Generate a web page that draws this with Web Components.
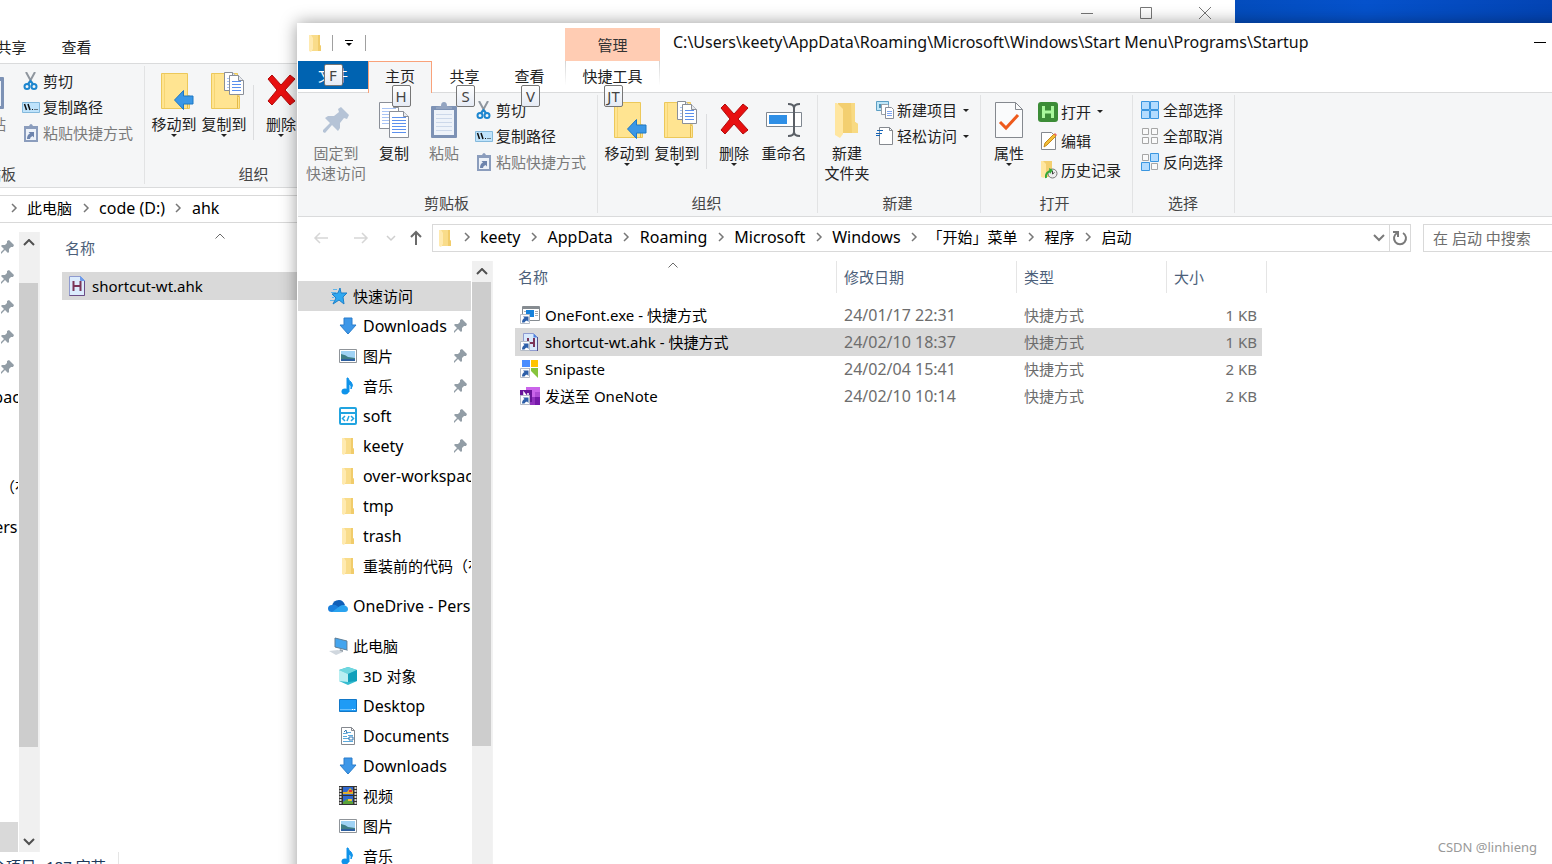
<!DOCTYPE html>
<html lang="zh-CN">
<head>
<meta charset="utf-8">
<title>启动</title>
<style>
html,body{margin:0;height:100%;overflow:hidden}
body{font:15px/20px "Noto Sans","Noto Sans CJK SC",sans-serif;color:#000}
</style>
</head>
<body>
<desk-top>
  <explorer-window class="back">
    <ribbon-tab slot="tabs" kind="file">文件</ribbon-tab>
    <ribbon-tab slot="tabs" kind="active">主页</ribbon-tab>
    <ribbon-tab slot="tabs">共享</ribbon-tab>
    <ribbon-tab slot="tabs">查看</ribbon-tab>
    <ribbon-group slot="ribbon" label="剪贴板" kind="clip">
      <big-button class="wide" icon="pin" off>固定到<br>快速访问</big-button>
      <big-button icon="copy">复制</big-button>
      <big-button icon="paste" off>粘贴</big-button>
      <small-button slot="small" icon="cut">剪切</small-button>
      <small-button slot="small" icon="path">复制路径</small-button>
      <small-button slot="small" icon="pastelink" off>粘贴快捷方式</small-button>
    </ribbon-group>
    <ribbon-group slot="ribbon" label="组织" kind="org">
      <big-button icon="moveto" menu>移动到</big-button>
      <big-button icon="copyto" menu>复制到</big-button>
      <rule-line></rule-line>
      <big-button icon="del" menu>删除</big-button>
      <big-button icon="rename">重命名</big-button>
    </ribbon-group>
    <crumb-item slot="crumbs">此电脑</crumb-item>
    <crumb-item slot="crumbs" lang="en">code (D:)</crumb-item>
    <crumb-item slot="crumbs" lang="en">ahk</crumb-item>
    <nav-tree slot="tree" pos="scrolled">
      <tree-item icon="down" pin lang="en">Downloads</tree-item>
      <tree-item icon="pic" pin>图片</tree-item>
      <tree-item icon="music" pin>音乐</tree-item>
      <tree-item icon="soft" pin lang="en">soft</tree-item>
      <tree-item icon="folder" pin lang="en">keety</tree-item>
      <tree-item icon="folder" lang="en">over-workspace</tree-item>
      <tree-item icon="folder" lang="en">tmp</tree-item>
      <tree-item icon="folder" lang="en">trash</tree-item>
      <tree-item icon="folder">重装前的代码（有用）</tree-item>
      <tree-item icon="onedrive" root lang="en">OneDrive - Personal</tree-item>
      <tree-item icon="pc" root>此电脑</tree-item>
      <tree-item icon="cube">3D 对象</tree-item>
      <tree-item icon="desktop" lang="en">Desktop</tree-item>
      <tree-item icon="doc" lang="en">Documents</tree-item>
      <tree-item icon="down" lang="en">Downloads</tree-item>
      <tree-item icon="video">视频</tree-item>
      <tree-item icon="pic">图片</tree-item>
      <tree-item icon="music">音乐</tree-item>
      <tree-item icon="desktop" lang="en">OS (C:)</tree-item>
      <tree-item icon="desktop" selected lang="en">code (D:)</tree-item>
    </nav-tree>
    <file-list slot="files" data="ahk"></file-list>
    <status-line slot="status"><span slot="count">1 个项目</span><span slot="picked">选中 1 个项目</span><span slot="size">187 字节</span></status-line>
  </explorer-window>

  <explorer-window class="front">
    <quick-bar slot="quick"></quick-bar>
    <span slot="context">管理</span>
    <span slot="title">C:\Users\keety\AppData\Roaming\Microsoft\Windows\Start Menu\Programs\Startup</span>
    <ribbon-tab slot="tabs" kind="file" tip="F">文件</ribbon-tab>
    <ribbon-tab slot="tabs" kind="active" tip="H">主页</ribbon-tab>
    <ribbon-tab slot="tabs" tip="S">共享</ribbon-tab>
    <ribbon-tab slot="tabs" tip="V">查看</ribbon-tab>
    <ribbon-tab slot="tabs" kind="context" tip="JT">快捷工具</ribbon-tab>
    <ribbon-group slot="ribbon" label="剪贴板" kind="clip">
      <big-button class="wide" icon="pin" off>固定到<br>快速访问</big-button>
      <big-button icon="copy">复制</big-button>
      <big-button icon="paste" off>粘贴</big-button>
      <small-button slot="small" icon="cut">剪切</small-button>
      <small-button slot="small" icon="path">复制路径</small-button>
      <small-button slot="small" icon="pastelink" off>粘贴快捷方式</small-button>
    </ribbon-group>
    <ribbon-group slot="ribbon" label="组织" kind="org">
      <big-button icon="moveto" menu>移动到</big-button>
      <big-button icon="copyto" menu>复制到</big-button>
      <rule-line></rule-line>
      <big-button icon="del" menu>删除</big-button>
      <big-button icon="rename">重命名</big-button>
    </ribbon-group>
    <ribbon-group slot="ribbon" label="新建" kind="new">
      <big-button icon="newfolder">新建<br>文件夹</big-button>
      <small-button slot="small" icon="newitem" menu>新建项目</small-button>
      <small-button slot="small" icon="access" menu>轻松访问</small-button>
    </ribbon-group>
    <ribbon-group slot="ribbon" label="打开" kind="open">
      <big-button icon="props" menu>属性</big-button>
      <small-button slot="small" class="tall" icon="ahk" menu>打开</small-button>
      <small-button slot="small" class="tall" icon="edit">编辑</small-button>
      <small-button slot="small" class="tall" icon="history">历史记录</small-button>
    </ribbon-group>
    <ribbon-group slot="ribbon" label="选择" kind="select">
      <small-button slot="small" class="loose" icon="selall">全部选择</small-button>
      <small-button slot="small" class="loose" icon="selnone">全部取消</small-button>
      <small-button slot="small" class="loose" icon="selinv">反向选择</small-button>
    </ribbon-group>
    <crumb-item slot="crumbs" lang="en">keety</crumb-item>
    <crumb-item slot="crumbs" lang="en">AppData</crumb-item>
    <crumb-item slot="crumbs" lang="en">Roaming</crumb-item>
    <crumb-item slot="crumbs" lang="en">Microsoft</crumb-item>
    <crumb-item slot="crumbs" lang="en">Windows</crumb-item>
    <crumb-item slot="crumbs">「开始」菜单</crumb-item>
    <crumb-item slot="crumbs">程序</crumb-item>
    <crumb-item slot="crumbs">启动</crumb-item>
    <search-box slot="search" hint="在 启动 中搜索"></search-box>
    <nav-tree slot="tree">
      <tree-item icon="star" root selected>快速访问</tree-item>
      <tree-item icon="down" pin lang="en">Downloads</tree-item>
      <tree-item icon="pic" pin>图片</tree-item>
      <tree-item icon="music" pin>音乐</tree-item>
      <tree-item icon="soft" pin lang="en">soft</tree-item>
      <tree-item icon="folder" pin lang="en">keety</tree-item>
      <tree-item icon="folder" lang="en">over-workspace</tree-item>
      <tree-item icon="folder" lang="en">tmp</tree-item>
      <tree-item icon="folder" lang="en">trash</tree-item>
      <tree-item icon="folder">重装前的代码（有用）</tree-item>
      <tree-item icon="onedrive" root lang="en">OneDrive - Personal</tree-item>
      <tree-item icon="pc" root>此电脑</tree-item>
      <tree-item icon="cube">3D 对象</tree-item>
      <tree-item icon="desktop" lang="en">Desktop</tree-item>
      <tree-item icon="doc" lang="en">Documents</tree-item>
      <tree-item icon="down" lang="en">Downloads</tree-item>
      <tree-item icon="video">视频</tree-item>
      <tree-item icon="pic">图片</tree-item>
      <tree-item icon="music">音乐</tree-item>
    </nav-tree>
    <file-list slot="files" data="startup"></file-list>
  </explorer-window>
  <span slot="mark">CSDN @linhieng</span>
</desk-top>

<script>
const svg=(w,h,body)=>`<svg width="${w}" height="${h}" viewBox="0 0 ${w} ${h}" fill="none" aria-hidden="true">${body}</svg>`;
const PIN='<path d="M8 0l5 5-1 2-2 0-2 2 0 3-1 1-3-3-4 4-1-1 4-4-3-3 1-1 3 0 2-2 0-2z"';
const sheet=(x,y,w,h,c)=>{let l='';for(let i=6;i<h-3;i+=3)l+=`M${x+3} ${y+i+.5}h${w-6}`;
  return `<path d="M${x+.5} ${y+.5}h${w-6}l5 5v${h-6}h-${w-1}z" fill="#fff" stroke="#8a8f98"/><path d="M${x+w-5.5} ${y+.5}v5h5" stroke="#8a8f98" fill="#e6e9ee"/><path d="${l}" stroke="${c}"/>`};
const BIGFOLDER='<path d="M1.500 1.500h26v23h2v12h-28z" fill="#ffe491" stroke="#ecc85a"/><path d="M4.500 2v34" stroke="#f6d573"/><path d="M27.500 36.500v-11q0-2 2-2" stroke="#e3b948"/>';
const LINK='<path d="M.5 8.500h9v9h-9z" fill="#fff" stroke="#b5bcc6"/><path d="M2 16.500q0-3.500 2.500-4.500L3 10.500h5.500V16L7 14.500q-2 .5-2.500 2z" fill="#2d5fa8"/>';
const sq=(x,y,on)=>on?`<path d="M${x+.5} ${y+.5}h8v8h-8z" fill="#b3dcff" stroke="#3a96e0"/>`:`<path d="M${x+1.5} ${y+1.5}h6v6h-6z" fill="#fafafa" stroke="#a6a6a6"/>`;
const ICONS={
 folder:svg(14,18,'<path d="M3 1h9v10l1 1v5H4z" fill="#f9dc8a"/><path d="M10 1h2v10l1 1v5h-3z" fill="#f1cc6b"/><path d="M1 1h2l2 3v11l-2 3-2-1z" fill="#ffeab0"/>'),
 pin:svg(28,28,'<path d="M19 1l8 8-2 4-3-1-4 5v5l-2 3-6-6-7 8-2-1 0-2 7-7-5-5 3-2 6 0 5-4-1-3z" fill="#b5c3d6"/>'),
 copy:svg(32,38,sheet(1,1,20,27,'#a9c4f5')+sheet(11,10,20,27,'#5b90ee')),
 paste:svg(28,38,'<rect x="1" y="5" width="26" height="32" rx="1" fill="#7d92b5"/><path d="M4 9h20v25H4z" fill="#eef3fa"/><path d="M6 13.500h16M6 17.500h16M6 21.500h16M6 25.500h16M6 29.500h16" stroke="#ccd8ea"/><path d="M6 8V6l5-1q0-4 3-4t3 4l5 1v2z" fill="#93a4c0"/>'),
 cut:svg(18,18,'<path d="M4 0l6 11M13 0L7 11" stroke="#8f969e" stroke-width="2"/><ellipse cx="5" cy="14.500" rx="2.500" ry="2.500" stroke="#1d86cf" stroke-width="2"/><ellipse cx="12" cy="14.500" rx="2.500" ry="2.500" stroke="#1d86cf" stroke-width="2"/><path d="M6 12l2.500-3 2.500 3" stroke="#1d86cf" stroke-width="2"/>'),
 path:svg(18,18,'<path d="M.5 4.500h17v10H.5z" fill="#bfe3fb" stroke="#84b9dc"/><path d="M2.500 6l2 6M6 6l2 6" stroke="#111" stroke-width="1.500"/><path d="M10 11.500h1m1.500 0h1m1 0h1" stroke="#111"/>'),
 pastelink:svg(18,18,'<path d="M2 2h14v16H2z" fill="#8b9dbd"/><path d="M4 5h10v11H4z" fill="#edf2f9"/><path d="M4 4l3-2q2-4 4 0l3 2z" fill="#8b9dbd"/><path d="M5 15q0-4.500 3-5.500L6.500 8H12v5.500L10.500 12Q8 13 8 15z" fill="#6d84ad"/>'),
 moveto:svg(40,38,'<g transform="translate(6 0)">'+BIGFOLDER+'<path d="M14.500 28l9-9.500v5.500h9.500v8h-9.500v5.500z" fill="#3b97e6" stroke="#1f78c4"/></g>'),
 copyto:svg(40,38,'<g transform="translate(6 0)">'+BIGFOLDER+sheet(14,0,14,19,'#a9c4f5')+sheet(19,3,15,20,'#5b90ee')+'</g>'),
 del:svg(34,38,'<path d="M4 7l4-4 9 10 9-10 5 4-10 11 10 11-5 4-9-10-9 10-4-4 9-11z" fill="#e81010" stroke="#b00b0b"/>'),
 rename:svg(38,38,'<path d="M1.500 11.500h35v14h-35z" fill="#fff" stroke="#7f8790"/><path d="M4 14h18v9H4z" fill="#2f8fe6"/><path d="M29 6v26" stroke="#5a5f66" stroke-width="2"/><path d="M23 3q6 0 6 4 0-4 6-4M23 35q6 0 6-4 0 4 6 4" stroke="#5a5f66" stroke-width="2"/>'),
 newfolder:svg(28,38,'<path d="M5 2h17v19l3 2v9H5z" fill="#f3cf70"/><path d="M18 2h4v19l3 2v9h-6z" fill="#f8da83"/><path d="M2 2h2l6 6v25l-3 4-5-3z" fill="#ffe6a0"/>'),
 newitem:svg(18,18,'<path d="M.5.5h12v9H.5z" fill="#bfe6f7" stroke="#5c9fc4"/><path d="M3 3h5v4H3z" fill="#4d93b8"/><path d="M5.500 3.500h6l1 1v9h-7z" fill="#fff" stroke="#98a0a8"/><path d="M9.500 6.500h6l2 2v9h-8z" fill="#fff" stroke="#8a8f98"/><path d="M11 10.500h5M11 12.500h5M11 14.500h5" stroke="#7ea4ef"/>'),
 access:svg(18,18,'<path d="M3.500.5h10l3 3v14h-13z" fill="#fff" stroke="#85898f"/><path d="M13.500.5v3h3" stroke="#85898f"/><path d="M1 3.500h6M0 6.500h6M0 8.500h4" stroke="#1463b5"/>'),
 props:svg(30,38,'<path d="M1.500 1.500h20l7 7v28h-27z" fill="#fafbfc" stroke="#85898f"/><path d="M21.500 1.500v7h7" stroke="#85898f"/><path d="M6 21l6 6L24 14" stroke="#ee5a1c" stroke-width="3"/>'),
 ahk:svg(20,20,'<rect width="20" height="20" rx="3" fill="#3c8c37"/><path d="M5.500 4v12M14.500 4v12M5.500 10h9" stroke="#a9f79c" stroke-width="3"/>'),
 edit:svg(20,18,'<path d="M3.500.5h10l4 4v13h-14z" fill="#fff" stroke="#85898f"/><path d="M6 15l1-4L16 2l2 2-9 9z" fill="#f3bf38" stroke="#c58a1d"/><path d="M16 2l2 2 1-1-2-2z" fill="#e66"/>'),
 history:svg(20,18,'<path d="M3 0h11v16H4z" fill="#f3cf70"/><path d="M3 0h2l3 3v11l-2 3-3-1z" fill="#ffe6a0"/><circle cx="14.500" cy="12.500" r="4.500" fill="#eee" stroke="#777"/><path d="M14.500 10v3l2-1.500" stroke="#444"/><path d="M8 17q-1-6 5-7" stroke="#35a83a" stroke-width="2"/><path d="M11 7l4 2-3 4z" fill="#35a83a"/>'),
 selall:svg(18,18,sq(0,0,1)+sq(9,0,1)+sq(0,9,1)+sq(9,9,1)),
 selnone:svg(18,18,sq(0,0,0)+sq(9,0,0)+sq(0,9,0)+sq(9,9,0)),
 selinv:svg(18,18,sq(0,0,0)+sq(9,0,1)+sq(0,9,1)+sq(9,9,0)),
 star:svg(20,18,'<path d="M12 1l1 5 6 0-4 4 1 7-5-4-6 4 3-6-4-4 6-1z" fill="#2fa8f0" stroke="#1b7fc9"/><path d="M5 2.500h4M3 5.500h5M4 10.500h2M2 13.500h4" stroke="#5fb5ea"/>'),
 down:svg(18,18,'<path d="M5 1h8v7h4l-8 9-8-9h4z" fill="#3d97e8" stroke="#2a7dcb"/>'),
 pic:svg(18,18,'<path d="M.5 2.500h17v13H.5z" fill="#fff" stroke="#8f9499"/><path d="M2 4h14v10H2z" fill="#9fd2f5"/><path d="M2 7q5 1 7 3l7 1v3H2z" fill="#3f7e86"/><path d="M2 12h14v2H2z" fill="#2d5fa0"/>'),
 music:svg(18,18,'<ellipse cx="6" cy="14.500" rx="3.500" ry="3" fill="#0f93ea"/><path d="M8 15V1h1q1 3 3 4 3 3 0 7 1-4-2-5v8z" fill="#0f93ea" stroke="#0f93ea"/>'),
 soft:svg(18,18,'<rect x="1" y="1" width="16" height="16" rx="1" stroke="#21a4e0" stroke-width="2"/><path d="M1 6h16" stroke="#21a4e0" stroke-width="2"/><path d="M6 9l-2.500 2.500L6 14M12 9l2.500 2.500L12 14M10 9l-2 5" stroke="#21a4e0" stroke-width="1.500"/>'),
 onedrive:svg(20,18,'<path d="M4 9q1-6 7-6 4 0 6 5l-8 4z" fill="#0f5fb8"/><path d="M4 15q-4 0-4-3.500T4 8q3-1 5 1l8 5z" fill="#1a7fdc"/><path d="M4 15l8-6q3-2 6 0 2 1 2 3 0 3-3 3z" fill="#2aa3ef"/>'),
 pc:svg(20,18,'<path d="M7 1l12 3v9L7 10z" fill="#44a5ee" stroke="#5d7d96"/><path d="M19 4l1 0v10h-1z" fill="#bcc6cf"/><path d="M12 12l3 1v2l-4 0z" fill="#9aa4ad"/><path d="M1 14l9-1 5 2-7 3z" fill="#d0d7de"/>'),
 cube:svg(18,18,'<path d="M9 0l9 3v11l-9 4-9-4V3z" fill="#35bcd0"/><path d="M9 0l9 3-9 4-9-4z" fill="#6fd7df"/><path d="M0 3l9 4v8l-9-1z" fill="#b9eff2"/><path d="M9 7l9-4v11l-9 1z" fill="#12a0bb"/>'),
 desktop:svg(18,18,'<path d="M.5 2.500h17v12H.5z" fill="#1f9bf5" stroke="#1278c8"/><path d="M1 12.500h16" stroke="#6cc0fb"/><path d="M13 12.500h1m1 0h1" stroke="#fff"/>'),
 doc:svg(18,18,'<path d="M2.500.5h10l3 3v14h-13z" fill="#fff" stroke="#85898f"/><path d="M12.500.5v3h3" stroke="#85898f"/><path d="M4 6.500h3M8 5.500h4M9 8.500h5M4 9.500h4M4 11.500h6M4 14.500h10" stroke="#5ba9dc"/><path d="M5 5l2-2 1 4M10 10h4v3h-4z" stroke="#3078b4"/>'),
 video:svg(18,20,'<path d="M0 0h18v19H0z" fill="#333"/><path d="M1.500 1v18M16.500 1v18" stroke="#d7d7d7" stroke-width="2" stroke-dasharray="2 1"/><path d="M4 1h10v8H4zM4 10h10v8H4z" fill="#2f68cf"/><path d="M4 6h4l3-4 3 3v3H4z" fill="#e0b02d"/><path d="M10 4h3v2h-3z" fill="#d33"/><path d="M4 16l4-3 6 3v2H4z" fill="#5aa33a"/><path d="M9 13h4v2H9z" fill="#efc13a"/>'),
 smallpin:svg(14,14,PIN+' fill="#929da6"/>'),
 ahkdoc:svg(18,20,'<path d="M1.500.5h11l4 4v15h-15z" fill="#dcecfd" stroke="#8f9bd0"/><path d="M16.500 5v14.500h-15" stroke="#6b4d85"/><path d="M12.500.5v4h4z" fill="#6e9bea" stroke="#6e9bea"/><path d="M5.500 5v10M12.500 5v10M5.500 10h7" stroke="#7b3558" stroke-width="2"/>'),
 onefont:svg(20,18,'<path d="M2.500.5h17v14h-17z" fill="#fff" stroke="#868c91"/><path d="M3 2h16" stroke="#868c91" stroke-width="2"/><path d="M6 4h8v7H6z" fill="#1682dc"/><path d="M15 5.500h3M15 7.500h3M15 9.500h3M4 5.500h2" stroke="#a8adb2"/>'+LINK),
 ahklink:svg(20,18,'<path d="M3.500.5h10l4 4v13h-14z" fill="#d8e9fc" stroke="#8f9bd0"/><path d="M17.500 4v14" stroke="#54508f"/><path d="M13.500.5v4h4z" fill="#4f83e0"/><path d="M8 5v8M14 5v9M8 10h6" stroke="#7b3558" stroke-width="2"/>'+LINK),
 snip:svg(20,18,'<path d="M2 0h8v7H2z" fill="#4a8dff"/><path d="M11 0h7v7h-7z" fill="#ffc400"/><path d="M2 8h8v2H2z" fill="#ee4b3d"/><path d="M11 8h7v10l-7-7z" fill="#87c43c"/>'+LINK),
 onenote:svg(20,18,'<path d="M6 0h14v18H6z" fill="#ca64ea"/><path d="M15 5h5v5h-5z" fill="#ae4bd5"/><path d="M10 10h5v8h-5z" fill="#9332bf"/><path d="M15 10h5v8h-5z" fill="#7719aa"/><path d="M0 3h12v12H0z" fill="#6a1599"/><path d="M4 11V6l4 5V6" stroke="#fff" stroke-width="1.500"/>'+LINK),
 back:svg(16,14,'<path d="M15 7H2M7 2L2 7l5 5" stroke="#d6d6d6" stroke-width="1.500"/>'),
 fwd:svg(16,14,'<path d="M1 7h13M9 2l5 5-5 5" stroke="#d6d6d6" stroke-width="1.500"/>'),
 recent:svg(10,8,'<path d="M1 2l4 4 4-4" stroke="#cfcfcf" stroke-width="1.500"/>'),
 up:svg(14,16,'<path d="M7 15V2M2 7l5-5 5 5" stroke="#6a6a6a" stroke-width="2"/>'),
 chev:svg(8,10,'<path d="M2 1l4 4-4 4" stroke="#777" stroke-width="1.500"/>'),
 drop:svg(12,10,'<path d="M1 2l5 5 5-5" stroke="#7a7a7a" stroke-width="2"/>'),
 refresh:svg(16,16,'<path d="M11 3A6 6 0 1 1 5 3" stroke="#7a7a7a" stroke-width="2"/><path d="M1 2h5v5" stroke="#7a7a7a" stroke-width="2"/>'),
 sup:svg(12,8,'<path d="M1 6l5-5 5 5" stroke="#505050" stroke-width="2"/>'),
 sdown:svg(12,8,'<path d="M1 1l5 5 5-5" stroke="#505050" stroke-width="2"/>'),
 sort:svg(10,6,'<path d="M0.500 5.500L5 1l4.500 4.500" stroke="#6a6a6a"/>'),
 tri:svg(6,3,'<path d="M0 0h6L3 3z" fill="#222"/>'),
 qat:svg(8,8,'<path d="M0 1.500h8" stroke="#000"/><path d="M1 4h6L4 7z" fill="#000"/>'),
 min:svg(12,12,'<path d="M0 6.500h12" stroke="currentColor"/>'),
 max:svg(12,12,'<path d="M.5.5h11v11H.5z" stroke="currentColor"/>'),
 close:svg(12,12,'<path d="M0 0l12 12M12 0L0 12" stroke="currentColor"/>')
};
const RESET='button{font:inherit;color:inherit;background:none;border:0;padding:0;margin:0}svg{display:block;flex:none}';
const define=(name,html)=>customElements.define(name,class extends HTMLElement{
  connectedCallback(){
    if(this.shadowRoot)return;
    const t=document.createElement('template');
    t.innerHTML=typeof html==='function'?html(this):html;
    this.attachShadow({mode:'open'}).append(t.content.cloneNode(true));
  }
});

define('desk-top',`<style>
:host{display:block;position:relative;height:100vh;overflow:hidden;background:linear-gradient(90deg,#034cbc 79%,#0552cc 88%,#0344b4)}
.mark{position:absolute;right:15px;bottom:7px;font-size:13px;color:#999}
</style><slot></slot><div class="mark"><slot name="mark"></slot></div>`);

define('explorer-window',el=>{const front=el.classList.contains('front');return `<style>${RESET}
:host{position:absolute;display:flex;flex-direction:column;box-sizing:border-box;background:#fff;border:1px solid #fff}
:host(.back){left:-156px;right:317px;top:-6px;bottom:-22px;color:#000}
:host(.front){left:297px;right:-136px;top:23px;bottom:-51px;box-shadow:0 0 16px rgba(0,0,0,.4)}
.title{display:flex;height:37px;align-items:stretch}
.quick{width:267px;display:flex}
.context{width:95px;margin:4px 13px 0 0;background:#ffccb3;text-align:center;line-height:34px;color:#333}
.name{flex:1;line-height:37px;white-space:nowrap;font-size:16px;color:#111}
.ctl button{width:59px;height:35px;display:inline-flex;align-items:center;justify-content:center}
.ctl{display:flex}
:host(.back) .ctl{color:#777}
.tabs{display:flex;height:31px}
.ribbon{display:flex;height:123px;background:#f5f6f7;border:solid #dadbdc;border-width:1px 0}
.bar{display:flex;padding:7px 7px 9px 0;height:28px}
.nav{display:grid;grid-template-columns:46px 34px 26px 24px;margin-right:4px}
.nav button{display:flex;align-items:center;justify-content:center}
.addr{flex:1;display:flex;align-items:center;border:1px solid #d9d9d9;box-sizing:border-box;padding-left:5px;margin-right:12px}
.addr>span{flex:1;display:flex;align-items:center;padding:0 0 2px 1px}
.addr button{width:20px;height:26px;display:flex;align-items:center;justify-content:center}
.addr button:last-child{border-left:1px solid #d9d9d9;width:21px}
.search{width:257px}
.body{flex:1;display:flex;min-height:0}
.status{height:33px}
</style>
<div class="title"><div class="quick"><slot name="quick"></slot></div>${front?'<div class="context"><slot name="context"></slot></div>':''}
<div class="name"><slot name="title"></slot></div>
<div class="ctl"><button aria-label="最小化">${ICONS.min}</button><button aria-label="最大化">${ICONS.max}</button><button aria-label="关闭">${ICONS.close}</button></div></div>
<div class="tabs"><slot name="tabs"></slot></div>
<div class="ribbon"><slot name="ribbon"></slot></div>
<div class="bar"><div class="nav"><button aria-label="后退">${ICONS.back}</button><button aria-label="前进">${ICONS.fwd}</button><button aria-label="最近">${ICONS.recent}</button><button aria-label="上移">${ICONS.up}</button></div>
<div class="addr">${ICONS.folder}<span><slot name="crumbs"></slot></span><button aria-label="展开">${ICONS.drop}</button><button aria-label="刷新">${ICONS.refresh}</button></div>
<div class="search"><slot name="search"></slot></div></div>
<div class="body"><slot name="tree"></slot><slot name="files"></slot></div>
<div class="status"><slot name="status"></slot></div>`});

define('quick-bar',`<style>${RESET}:host{display:flex;align-items:center;padding-left:10px}
i{width:1px;height:16px;background:#a0a0a0;margin:0 10px}button{padding:0 2px}</style>
${ICONS.folder}<i></i><button aria-label="自定义快速访问工具栏">${ICONS.qat}</button><i></i>`);

define('ribbon-tab',el=>`<style>${RESET}
:host{position:relative;width:65px;display:block}
:host([kind=file]){width:70px;color:#fff}
:host([kind=active]){width:64px;z-index:1}
:host([kind=context]){width:95px;margin-left:3px}
button{width:100%;height:30px;color:#222;box-sizing:border-box}
:host([kind=file]) button{height:28px;background:#0063b1;color:#fff}
:host([kind=active]) button{height:32px;padding-bottom:3px;background:#f5f6f7;border:1px solid #f9a27a;border-bottom:0}
:host([kind=context]) button{border:solid;border-width:0 1px;border-image:linear-gradient(#d0d0d0,#fff 80%) 1}
b{position:absolute;z-index:2;top:24px;left:2px;right:0;margin:auto;width:fit-content;min-width:19px;height:22px;line-height:20px;padding:0 2px;box-sizing:border-box;border:1px solid #767676;border-radius:2px;background:linear-gradient(#fff,#e6ebf5);color:#444;text-align:center;font-weight:400}
:host([kind=file]) b{top:3px;left:0}
</style><button role="tab"><slot></slot></button>${el.hasAttribute('tip')?`<b>${el.getAttribute('tip')}</b>`:''}`);

define('ribbon-group',el=>`<style>
:host{display:flex;flex-direction:column;position:relative;padding:0 12px 0 7px}
:host::after{content:"";position:absolute;right:0;top:2px;bottom:3px;width:1px;background:#e2e3e4}
:host([kind=org]){padding:0 11px 0 6px}
:host([kind=new]){padding-left:6px}
:host([kind=open]){padding-left:5px}
:host([kind=select]){padding-left:8px}
.row{display:flex;flex:1;gap:4px}
.small{padding-top:4px;margin-left:4px}
:host([kind=new]) .small,:host([kind=open]) .small{margin-left:2px}
:host([kind=select]) .small{margin-left:0}
:host([kind=org]) .small{display:none}
.label{height:20px;text-align:center;margin:0 -2px 3px 0;color:#444}
</style><div class="row"><slot></slot><div class="small"><slot name="small"></slot></div></div><div class="label">${el.getAttribute('label')}</div>`);

define('rule-line',`<style>:host{display:block;width:1px;height:55px;margin:21px 0 0 2px;background:#dcdddf}</style>`);

define('big-button',el=>`<style>${RESET}
:host{display:block;width:46px}:host(.wide){width:62px}
button{width:100%;padding-top:8px;color:#222;white-space:nowrap;display:flex;flex-direction:column;align-items:center}
:host([off]) button{color:#7a7a7a}
.pic{height:38px;margin-bottom:4px;display:flex;align-items:center;justify-content:center}
</style><button>
<span class="pic">${ICONS[el.getAttribute('icon')]}</span><span><slot></slot></span>${el.hasAttribute('menu')?ICONS.tri:''}</button>`);

define('small-button',el=>`<style>${RESET}
:host{display:block;height:26px}:host(.tall){height:29px}
button{display:flex;align-items:center;height:100%;gap:3px;color:#222;white-space:nowrap}
:host(.loose) button{gap:4px}
:host([off]) button{color:#7a7a7a}
.tri{margin-left:3px}
</style><button>${ICONS[el.getAttribute('icon')]}<span><slot></slot></span>${el.hasAttribute('menu')?`<span class="tri">${ICONS.tri}</span>`:''}</button>`);

define('crumb-item',`<style>:host{display:flex;align-items:center;white-space:nowrap}
:host([lang=en]){font-size:16px}
span{width:27px;display:flex;justify-content:center}svg{display:block}a{color:inherit;text-decoration:none}</style><span>${ICONS.chev}</span><a href="#"><slot></slot></a>`);

define('search-box',el=>`<style>:host{display:block}
input{width:100%;height:28px;box-sizing:border-box;border:1px solid #d9d9d9;padding:0 9px;font:inherit;margin:0}
input::placeholder{color:#6d6d6d;opacity:1}</style><input type="search" aria-label="搜索" placeholder="${el.getAttribute('hint')}">`);

define('nav-tree',`<style>${RESET}
:host{display:flex;width:194px;margin-right:2px;border-right:1px solid #f2f2f2}
.list{width:173px;padding-top:20px;margin-right:1px;overflow:hidden}
:host([pos=scrolled]) .list{padding-top:0}
.bar{width:20px;background:#f0f0f0;display:flex;flex-direction:column}
.bar button{height:21px;display:flex;align-items:center;justify-content:center}
.thumb{flex:464;background:#cdcdcd;margin-right:1px}
.a{flex:0}.b{flex:114}
:host([pos=scrolled]) .a{flex:30}:host([pos=scrolled]) .b{flex:84}
</style><div class="list"><slot></slot></div>
<div class="bar"><button aria-label="向上滚动">${ICONS.sup}</button><div class="a"></div><div class="thumb"></div><div class="b"></div><button aria-label="向下滚动">${ICONS.sdown}</button></div>`);

define('tree-item',el=>`<style>
:host{display:flex;align-items:center;height:30px;padding-left:40px;white-space:nowrap}
:host([lang=en]){font-size:16px}
:host([root]){padding-left:30px;margin:10px 0 0}
:host([root]:first-child){margin:0}
:host([selected]){background:#d9d9d9}
.i{width:20px;margin-right:5px;display:flex;justify-content:center}
:host(:not([root])) .i{width:20px}
.t{flex:1;min-width:0;overflow:hidden}.p{padding:0 3px}svg{display:block}
</style><span class="i">${ICONS[el.getAttribute('icon')]}</span><span class="t"><slot></slot></span>${el.hasAttribute('pin')?`<span class="p">${ICONS.smallpin}</span>`:''}`);

const FILES={
 startup:{heads:['修改日期','类型'],last:'大小',rows:[
  ['onefont','OneFont.exe - 快捷方式','24/01/17 22:31','1 KB'],
  ['ahklink','shortcut-wt.ahk - 快捷方式','24/02/10 18:37','1 KB',1],
  ['snip','Snipaste','24/02/04 15:41','2 KB'],
  ['onenote','发送至 OneNote','24/02/10 10:14','2 KB']]},
 ahk:{heads:['',''],last:'',rows:[['ahkdoc','shortcut-wt.ahk','','',1]]}
};
define('file-list',el=>{const d=FILES[el.getAttribute('data')],full=el.getAttribute('data')==='startup';return `<style>
:host{display:block;flex:1;padding-left:20px}
table{table-layout:fixed;width:752px;border-collapse:separate;border-spacing:0}
th{position:relative;height:32px;padding:0 0 0 7px;box-sizing:border-box;border-right:1px solid #e5e5e5;text-align:left;font-weight:400;color:#4c607a}
th:first-child{padding-left:3px}
th svg{position:absolute;top:1px;left:0;right:6px;margin:auto}
tbody::before{content:"";display:block;height:8px}
td{height:27px;padding:0 0 0 7px;color:#6d6d6d;white-space:nowrap}
td:first-child{padding-left:5px;color:#000}
.f{display:flex;align-items:center;gap:5px}.f span{width:20px;display:flex;justify-content:center}
td.d{font-size:16px}
td.s{text-align:right;padding-right:5px}
.on td:not(:last-child){background:#d9d9d9;box-shadow:0 1px #d9d9d9}
</style><table><colgroup><col style="width:322px"><col style="width:180px"><col style="width:150px"><col style="width:95px"><col style="width:5px"></colgroup>
<thead><tr><th scope="col">名称${ICONS.sort}</th>${d.heads.map(h=>`<th scope="col">${h}</th>`).join('')}<th scope="col" colspan="2">${d.last}</th></tr></thead>
<tbody>${d.rows.map(r=>`<tr class="${r[4]?'on':''}"><td><div class="f"><span>${ICONS[r[0]]}</span>${r[1]}</div></td><td class="d">${r[2]}</td><td>${full?'快捷方式':''}</td><td class="s">${r[3]}</td><td></td></tr>`).join('')}</tbody></table>`});

define('status-line',`<style>:host{display:flex;height:33px;line-height:28px;color:#1e395b;white-space:nowrap}
.l{width:181px;padding-left:10px;display:flex;justify-content:space-between;margin-right:10px}
.r{padding-right:12px;border-right:1px solid #e5e5e5}</style>
<div class="l"><slot name="count"></slot><slot name="picked"></slot></div><div class="r"><slot name="size"></slot></div>`);
</script>
</body>
</html>
